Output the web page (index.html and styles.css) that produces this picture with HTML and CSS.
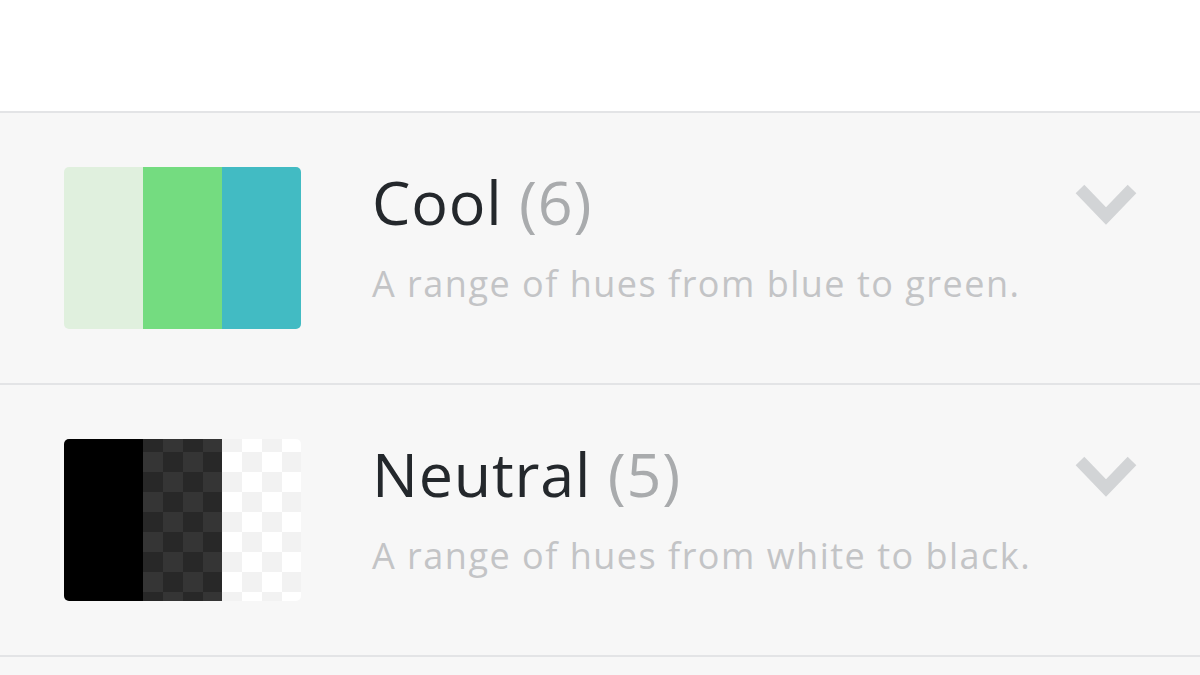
FILE: index.html
```html
<!DOCTYPE html>
<html>
<head>
<meta charset="utf-8">
<link rel="stylesheet" href="styles.css">
</head>
<body>
<div class="top"></div>
<div class="list">
  <div class="row">
    <div class="swatch">
      <span class="stripe s-mint"></span>
      <span class="stripe s-green"></span>
      <span class="stripe s-teal"></span>
    </div>
    <div class="info">
      <div class="title">Cool <span class="count">(6)</span></div>
      <div class="desc">A range of hues from blue to green.</div>
    </div>
    <svg class="chev" viewBox="0 0 64 44" width="64" height="44"><path d="M6 6 L32 33 L58 6" fill="none" stroke="#d2d4d6" stroke-width="12" stroke-linejoin="miter"/></svg>
  </div>
  <div class="row">
    <div class="swatch">
      <span class="stripe s-black"></span>
      <span class="stripe s-dark"></span>
      <span class="stripe s-light"></span>
    </div>
    <div class="info">
      <div class="title">Neutral <span class="count">(5)</span></div>
      <div class="desc">A range of hues from white to black.</div>
    </div>
    <svg class="chev" viewBox="0 0 64 44" width="64" height="44"><path d="M6 6 L32 33 L58 6" fill="none" stroke="#d2d4d6" stroke-width="12" stroke-linejoin="miter"/></svg>
  </div>
</div>
</body>
</html>
```
FILE: styles.css
```css
html, body {
  margin: 0;
  padding: 0;
}
body {
  width: 1200px;
  height: 675px;
  overflow: hidden;
  background: #f7f7f7;
  font-family: "Open Sans", "Noto Sans", sans-serif;
}
.top {
  height: 111px;
  background: #ffffff;
  border-bottom: 2px solid #e3e4e6;
}
.row {
  height: 270px;
  display: flex;
  align-items: center;
  padding-left: 64px;
  padding-right: 62px;
  border-bottom: 2px solid #e3e4e6;
  background: #f7f7f7;
}
.swatch {
  width: 237px;
  height: 162px;
  display: flex;
  border-radius: 5px;
  overflow: hidden;
  flex: none;
}
.stripe {
  flex: 1;
}
.s-mint { background: #e0f0de; }
.s-green { background: #74dc80; }
.s-teal { background: #42bbc3; }
.s-black { background: #000000; }
.s-dark {
  background: repeating-conic-gradient(#353535 0 25%, #282828 0 50%) 0 -7px / 40px 40px;
}
.s-light {
  background: repeating-conic-gradient(#ffffff 0 25%, #f2f2f2 0 50%) 0 -7px / 40px 40px;
}
.info {
  flex: 1;
  align-self: flex-start;
  margin-left: 71px;
  margin-top: 53px;
}
.title {
  font-size: 61px;
  line-height: 72px;
  letter-spacing: 0.8px;
  color: #24282c;
}
.count {
  color: #a9abad;
}
.desc {
  font-size: 36px;
  line-height: 46px;
  letter-spacing: 1.5px;
  color: #c3c4c6;
  margin-top: 23px;
}
.chev {
  flex: none;
  align-self: flex-start;
  margin-top: 70px;
}
```
